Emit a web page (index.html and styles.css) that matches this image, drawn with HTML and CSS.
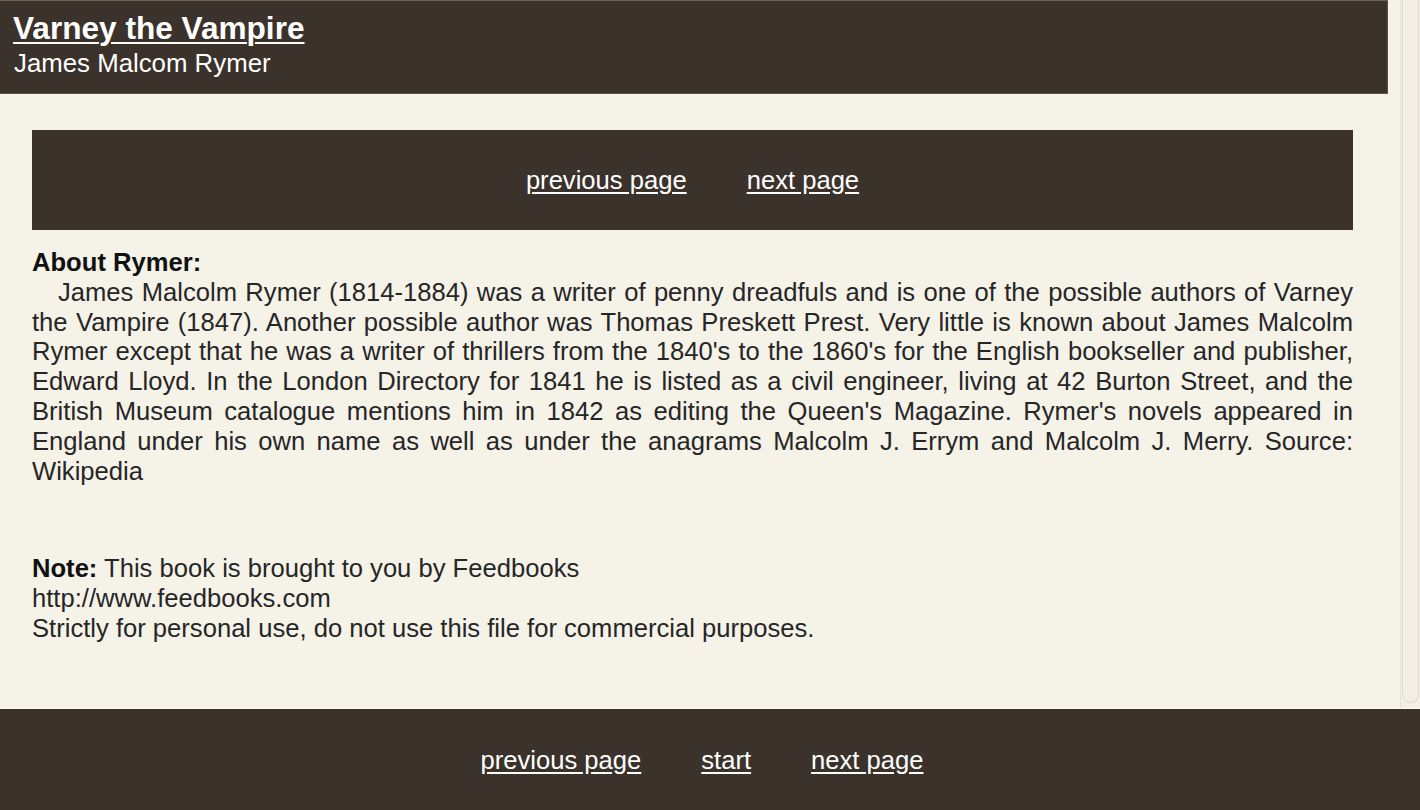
FILE: index.html
```html
<!DOCTYPE html>
<html lang="en">
<head>
<meta charset="utf-8">
<title>Varney the Vampire</title>
<link rel="stylesheet" href="styles.css">
</head>
<body>
<div class="app">
  <div class="viewport">
    <div class="page">
      <header class="top">
        <a class="title" href="#">Varney the Vampire</a>
        <div class="author">James Malcom Rymer</div>
      </header>
      <main class="content">
        <nav class="pager">
          <a href="#">previous page</a>
          <a href="#">next page</a>
        </nav>
        <section class="about">
          <div class="about-head">About Rymer:</div>
          <p class="about-text">
            <span class="line first">James Malcolm Rymer (1814-1884) was a writer of penny dreadfuls and is one of the possible authors of Varney</span>
            <span class="line">the Vampire (1847). Another possible author was Thomas Preskett Prest. Very little is known about James Malcolm</span>
            <span class="line">Rymer except that he was a writer of thrillers from the 1840's to the 1860's for the English bookseller and publisher,</span>
            <span class="line">Edward Lloyd. In the London Directory for 1841 he is listed as a civil engineer, living at 42 Burton Street, and the</span>
            <span class="line">British Museum catalogue mentions him in 1842 as editing the Queen's Magazine. Rymer's novels appeared in</span>
            <span class="line">England under his own name as well as under the anagrams Malcolm J. Errym and Malcolm J. Merry. Source:</span>
            <span class="line last">Wikipedia</span>
          </p>
        </section>
        <section class="note">
          <div><b>Note:</b> This book is brought to you by Feedbooks</div>
          <div>http://www.feedbooks.com</div>
          <div>Strictly for personal use, do not use this file for commercial purposes.</div>
        </section>
      </main>
    </div>
    <div class="scrollbar"><div class="thumb"></div></div>
  </div>
  <footer class="bottom">
    <a href="#">previous page</a>
    <a href="#">start</a>
    <a href="#">next page</a>
  </footer>
</div>
</body>
</html>
```
FILE: styles.css
```css
html, body {
  margin: 0;
  padding: 0;
  height: 810px;
  overflow: hidden;
}
body {
  background: #f5f2e8;
  font-family: "Liberation Sans", Arial, sans-serif;
  font-size: 25.6px;
  color: #262626;
}
.app {
  display: flex;
  flex-direction: column;
  width: 1420px;
  height: 810px;
}
.viewport {
  display: flex;
  height: 708px;
  flex: none;
}
.page {
  width: 1400px;
  flex: none;
}
.top {
  width: 1388px;
  box-sizing: border-box;
  height: 94px;
  background: #3b322c;
  border-top: 1px solid #6a625b;
  border-right: 1px solid #5c544c;
  border-bottom: 1px solid #5c544c;
  padding: 9px 13px 0;
  color: #fff;
}
.title {
  display: block;
  color: #fff;
  font-weight: bold;
  font-size: 31.6px;
  line-height: 36px;
  text-decoration: underline;
  text-decoration-thickness: 2px;
  text-underline-offset: 3px;
}
.author {
  margin-top: 2px;
  padding-left: 1px;
  font-size: 25.8px;
  line-height: 30px;
  color: #fff;
}
.content {
  padding: 36px 47px 0 32px;
}
.pager {
  height: 100px;
  background: #3b322c;
  display: flex;
  justify-content: center;
  align-items: center;
  gap: 60px;
}
.pager a, .bottom a {
  color: #fff;
  font-size: 25.6px;
  line-height: 30px;
  text-decoration: underline;
  text-underline-offset: 3px;
}
.about {
  margin-top: 18px;
  line-height: 29.8px;
}
.about-head {
  font-weight: bold;
  color: #111;
}
.about-text {
  margin: 0;
}
.line {
  display: block;
  text-align: justify;
  text-align-last: justify;
}
.line.first {
  text-indent: 26px;
}
.line.last {
  text-align-last: left;
}
.note {
  margin-top: 68px;
  line-height: 29.8px;
}
.note b {
  color: #111;
}
.scrollbar {
  width: 20px;
  flex: none;
  background: #f3f0e6;
  border-left: 1px solid #e6e2d7;
  box-sizing: border-box;
}
.thumb {
  margin: 0 1px;
  height: 703px;
  background: #f1eee4;
  border: 1px solid #dedace;
  border-top: none;
  border-radius: 0 0 8px 8px;
  box-sizing: border-box;
}
.bottom {
  flex: none;
  height: 102px;
  box-sizing: border-box;
  border-top: 1px solid #fbfaf6;
  background: #3b322c;
  display: flex;
  justify-content: center;
  align-items: center;
  gap: 60px;
  padding-right: 16px;
}
```
